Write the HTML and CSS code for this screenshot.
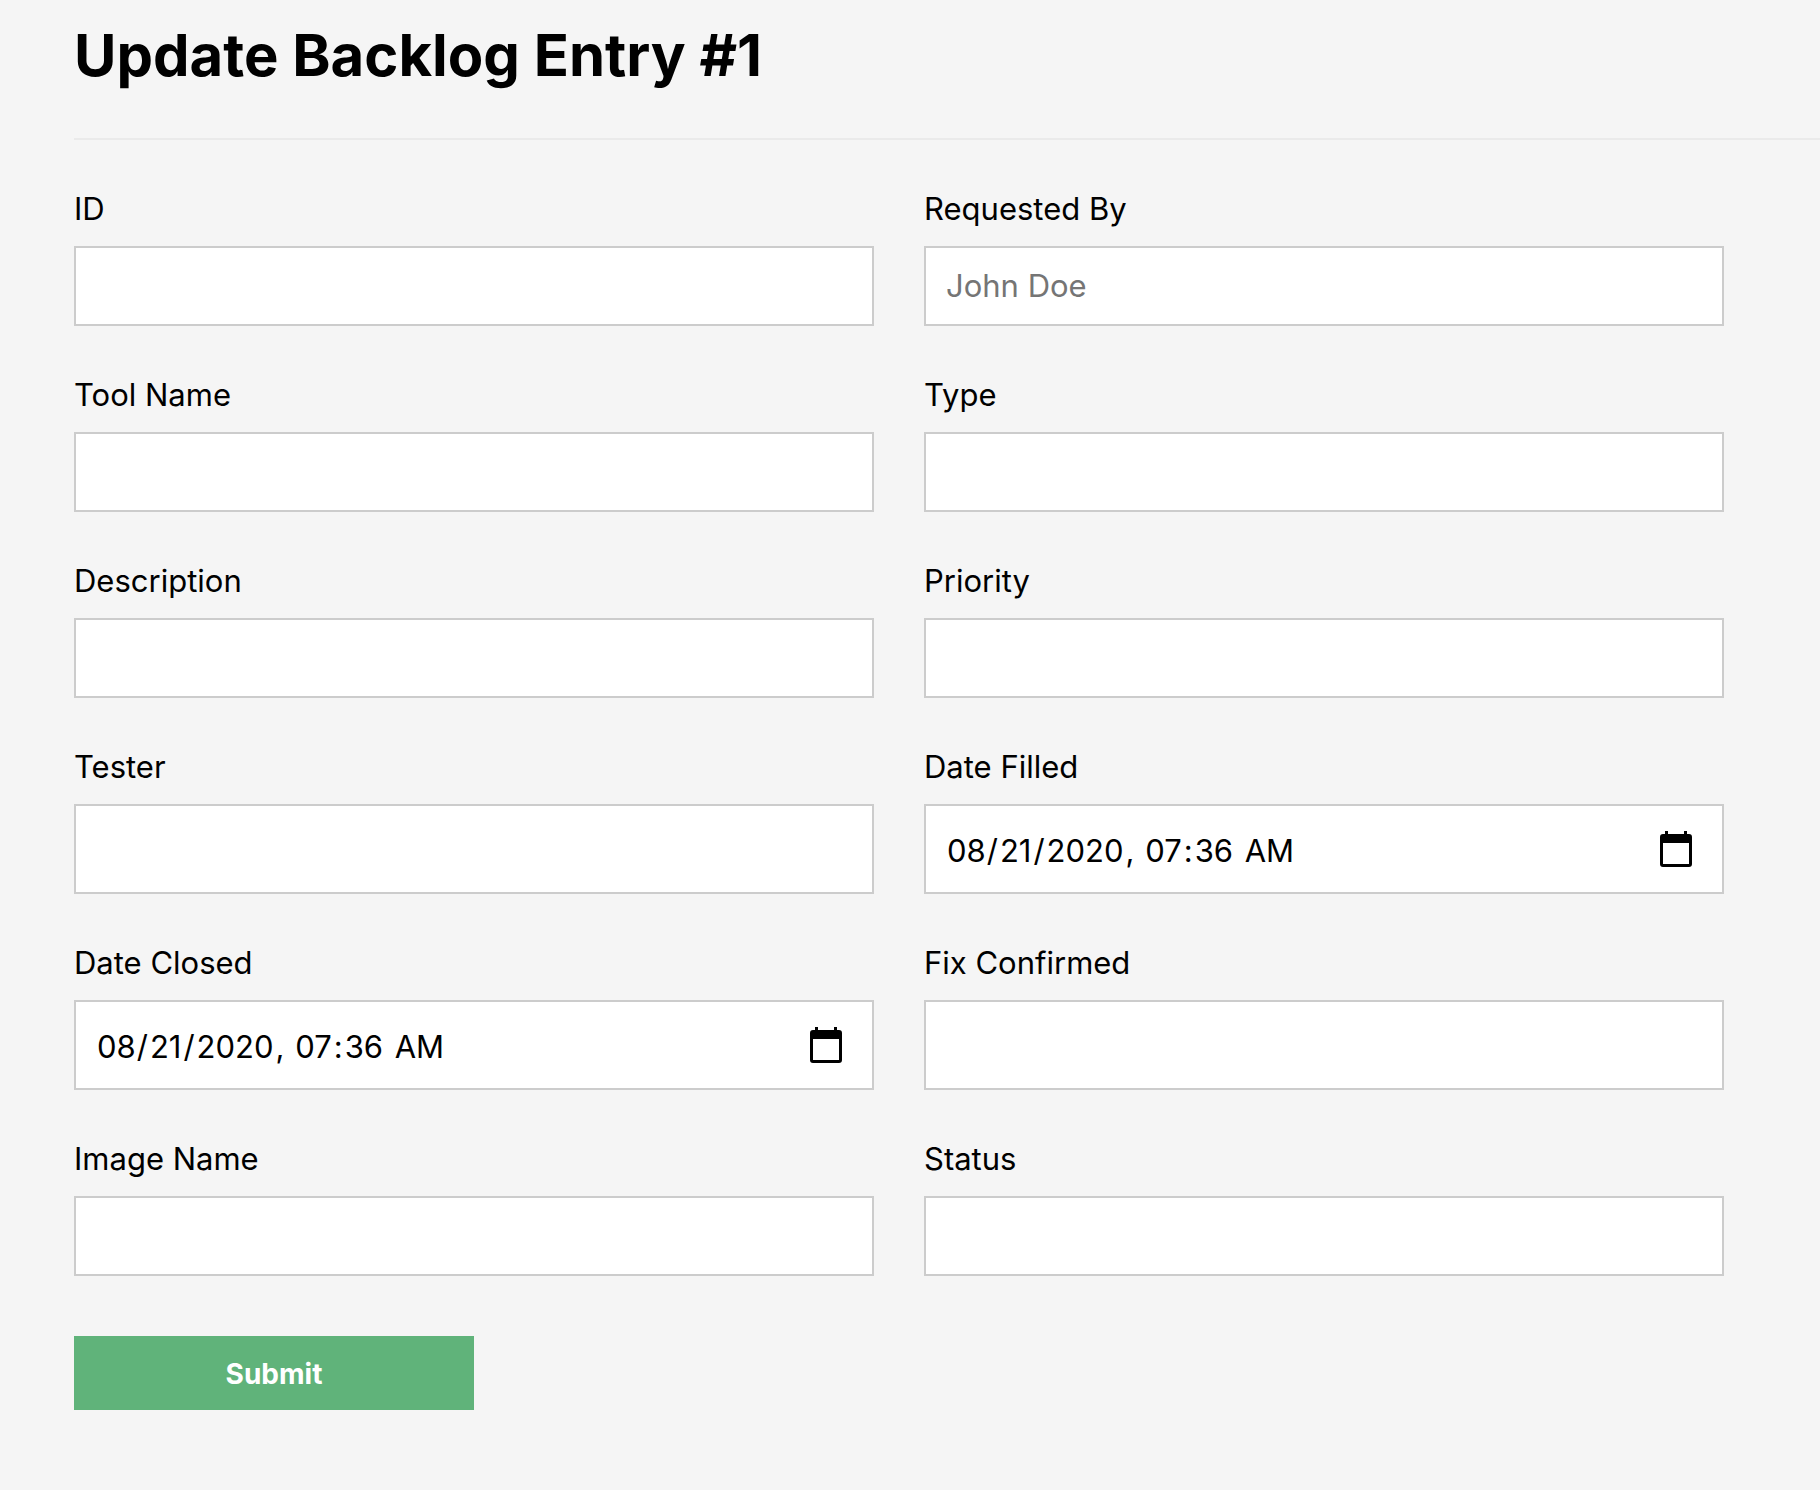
FILE: index.html
```html
<!DOCTYPE html>
<html lang="en-US">
<head>
<meta charset="utf-8">
<meta name="viewport" content="width=device-width, initial-scale=1">
<title>Update Backlog Entry #1</title>
<link rel="stylesheet" href="styles.css">
</head>
<body>
<main class="page">
  <h1 class="page-title">Update Backlog Entry #1</h1>
  <form class="entry-form">
    <div class="field">
      <label class="label" for="id">ID</label>
      <input class="input" type="text" id="id" name="id">
    </div>
    <div class="field">
      <label class="label" for="requested-by">Requested By</label>
      <input class="input" type="text" id="requested-by" name="requested_by" placeholder="John Doe">
    </div>
    <div class="field">
      <label class="label" for="tool-name">Tool Name</label>
      <input class="input" type="text" id="tool-name" name="tool_name">
    </div>
    <div class="field">
      <label class="label" for="type">Type</label>
      <input class="input" type="text" id="type" name="type">
    </div>
    <div class="field">
      <label class="label" for="description">Description</label>
      <input class="input" type="text" id="description" name="description">
    </div>
    <div class="field">
      <label class="label" for="priority">Priority</label>
      <input class="input" type="text" id="priority" name="priority">
    </div>
    <div class="field">
      <label class="label" for="tester">Tester</label>
      <input class="input" type="text" id="tester" name="tester">
    </div>
    <div class="field">
      <label class="label" for="date-filled">Date Filled</label>
      <input class="input input-date" type="datetime-local" id="date-filled" name="date_filled" value="2020-08-21T07:36">
    </div>
    <div class="field">
      <label class="label" for="date-closed">Date Closed</label>
      <input class="input input-date" type="datetime-local" id="date-closed" name="date_closed" value="2020-08-21T07:36">
    </div>
    <div class="field">
      <label class="label" for="fix-confirmed">Fix Confirmed</label>
      <input class="input" type="text" id="fix-confirmed" name="fix_confirmed">
    </div>
    <div class="field">
      <label class="label" for="image-name">Image Name</label>
      <input class="input" type="text" id="image-name" name="image_name">
    </div>
    <div class="field">
      <label class="label" for="status">Status</label>
      <input class="input" type="text" id="status" name="status">
    </div>
    <div class="actions">
      <button class="submit" type="submit">Submit</button>
    </div>
  </form>
</main>
</body>
</html>
```
FILE: styles.css
```css
* {
  box-sizing: border-box;
}

body {
  margin: 0;
  background: #f5f5f5;
  color: #000;
  font-family: Inter, "Liberation Sans", sans-serif;
  font-size: 31px;
}

.page {
  padding-left: 74px;
}

.page-title {
  margin: 0;
  padding: 20px 0 48px;
  border-bottom: 2px solid #eaeaea;
  font-size: 58px;
  line-height: 70px;
  font-weight: 700;
}

.entry-form {
  display: grid;
  grid-template-columns: 1fr 1fr;
  gap: 50px;
  padding: 50px 96px 80px 0;
}

.field {
  display: flex;
  flex-direction: column;
  gap: 18px;
}

.label {
  line-height: 38px;
}

.input {
  flex: 1 0 auto;
  width: 100%;
  min-height: 80px;
  margin: 0;
  padding: 18px 20px;
  border: 2px solid #ccc;
  border-radius: 0;
  background: #fff;
  color: #000;
  font: inherit;
  line-height: 38px;
}

.input::placeholder {
  color: #757575;
  opacity: 1;
}

.input-date {
  min-height: 90px;
}

.input-date::-webkit-datetime-edit {
  padding: 4px 0 0;
}

.input-date::-webkit-datetime-edit-month-field {
  padding: 0 1px;
}

.input-date::-webkit-datetime-edit-day-field,
.input-date::-webkit-datetime-edit-year-field,
.input-date::-webkit-datetime-edit-hour-field,
.input-date::-webkit-datetime-edit-minute-field {
  padding: 0 2px;
}

.input-date::-webkit-datetime-edit-ampm-field {
  padding: 0 1px 0 4px;
}

.input-date::-webkit-calendar-picker-indicator {
  width: 32px;
  height: 36px;
  margin: 0 10px 0 0;
  padding: 0;
  background: url("data:image/svg+xml,%3Csvg xmlns='http://www.w3.org/2000/svg' viewBox='0 0 32 36'%3E%3Cpath fill-rule='evenodd' d='M5 0h3v3h16V0h3v3h2a3 3 0 0 1 3 3v27a3 3 0 0 1-3 3H3a3 3 0 0 1-3-3V6a3 3 0 0 1 3-3h2zM3 12v21h26V12z'/%3E%3C/svg%3E") center / 32px 36px no-repeat;
}

.actions {
  grid-column: 1 / -1;
  padding-top: 10px;
}

.submit {
  width: 400px;
  max-width: 100%;
  padding: 20px 20px 18px;
  border: 0;
  background: #60b37a;
  color: #fff;
  font: inherit;
  font-size: 28px;
  line-height: 36px;
  font-weight: 700;
}
```
